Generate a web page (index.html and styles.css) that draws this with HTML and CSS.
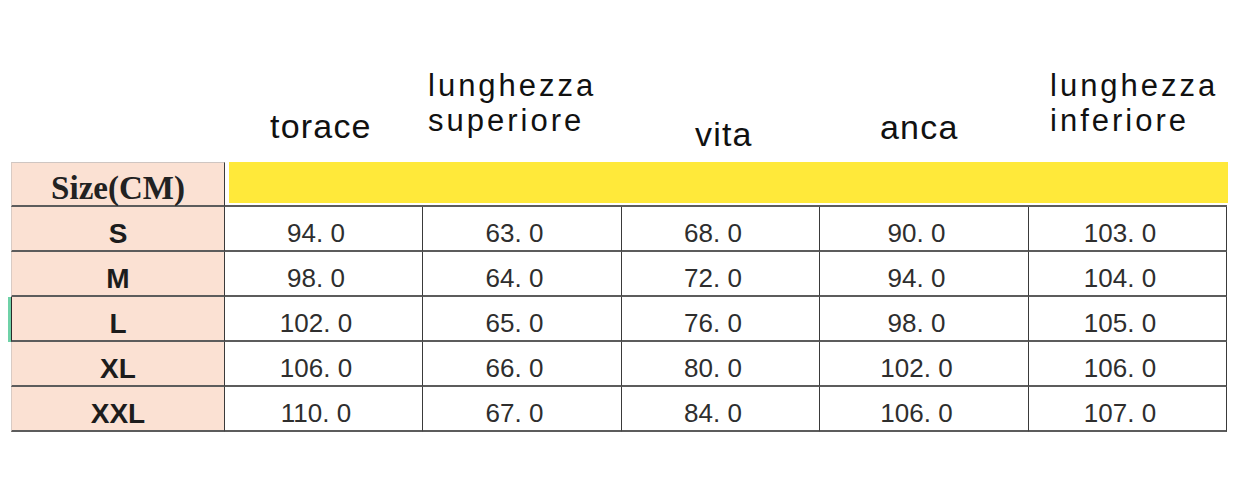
FILE: index.html
```html
<!DOCTYPE html>
<html lang="it">
<head>
<meta charset="utf-8">
<title>Size chart</title>
<link rel="stylesheet" href="styles.css">
</head>
<body>
<div class="page">
  <div class="labels">
    <div class="label single label-torace">torace</div>
    <div class="label double label-sup">lunghezza<br>superiore</div>
    <div class="label single label-vita">vita</div>
    <div class="label single label-anca">anca</div>
    <div class="label double label-inf">lunghezza<br>inferiore</div>
  </div>
  <div class="chart">
    <div class="cell size head-size">Size(CM)</div>
    <div class="cell head-yellow"><div class="yellow"></div></div>

    <div class="cell size">S</div>
    <div class="cell num">94. 0</div><div class="cell num">63. 0</div><div class="cell num">68. 0</div><div class="cell num">90. 0</div><div class="cell num">103. 0</div>

    <div class="cell size">M</div>
    <div class="cell num">98. 0</div><div class="cell num">64. 0</div><div class="cell num">72. 0</div><div class="cell num">94. 0</div><div class="cell num">104. 0</div>

    <div class="cell size sel">L</div>
    <div class="cell num">102. 0</div><div class="cell num">65. 0</div><div class="cell num">76. 0</div><div class="cell num">98. 0</div><div class="cell num">105. 0</div>

    <div class="cell size">XL</div>
    <div class="cell num">106. 0</div><div class="cell num">66. 0</div><div class="cell num">80. 0</div><div class="cell num">102. 0</div><div class="cell num">106. 0</div>

    <div class="cell size">XXL</div>
    <div class="cell num">110. 0</div><div class="cell num">67. 0</div><div class="cell num">84. 0</div><div class="cell num">106. 0</div><div class="cell num">107. 0</div>
  </div>
</div>
</body>
</html>
```
FILE: styles.css
```css
html, body {
  margin: 0;
  padding: 0;
  background: #ffffff;
}
.page {
  width: 1240px;
  height: 491px;
  overflow: hidden;
}
.labels {
  display: grid;
  grid-template-columns: 225px 198px 199px 198px 209px 198px;
  height: 162px;
  align-items: end;
  font-family: "Liberation Sans", Arial, sans-serif;
  color: #111111;
}
.label { white-space: nowrap; }
.single {
  font-size: 34px;
  line-height: 40px;
  letter-spacing: 1.2px;
}
.double {
  font-size: 31px;
  line-height: 35px;
  letter-spacing: 3px;
}
.label-torace { grid-column: 2; padding-left: 45px; padding-bottom: 16px; }
.label-sup    { grid-column: 3; padding-left: 5px;  padding-bottom: 24px; }
.label-vita   { grid-column: 4; padding-left: 73px; padding-bottom: 8px; }
.label-anca   { grid-column: 5; padding-left: 60px; padding-bottom: 15px; }
.label-inf    { grid-column: 6; padding-left: 21px; padding-bottom: 24px; }

.chart {
  margin-left: 11px;
  display: grid;
  grid-template-columns: 214px 198px 199px 198px 209px 198px;
  grid-auto-rows: 45px;
  width: 1216px;
}
.cell {
  box-sizing: border-box;
  display: flex;
  align-items: center;
  justify-content: center;
  border-bottom: 2px solid #5c5c5c;
}
.size {
  background: #fbe1d3;
  border-left: 1px solid #d9cbc4;
  border-right: 1px solid #3a3a3a;
  font-family: "Liberation Sans", Arial, sans-serif;
  font-weight: bold;
  font-size: 28px;
  color: #1c1c1c;
  padding-top: 10px;
}
.head-size {
  border-top: 1px solid #cfc6c2;
  font-family: "Liberation Serif", "Times New Roman", serif;
  font-size: 33px;
  color: #222222;
  padding-top: 8px;
}
.head-yellow {
  grid-column: 2 / span 5;
  align-items: stretch;
  justify-content: stretch;
  padding: 0 0 2px 4px;
}
.yellow {
  flex: 1;
  background: #ffe93a;
  margin-right: -1px;
}
.num {
  border-right: 1px solid #3a3a3a;
  font-family: "Liberation Sans", Arial, sans-serif;
  font-size: 26px;
  color: #2e2e2e;
  padding-top: 9px;
  padding-right: 15px;
}
.sel {
  border-left: 1px solid #2a2a2a;
  box-shadow: -3px 0 0 #6fd2a8;
}
```
